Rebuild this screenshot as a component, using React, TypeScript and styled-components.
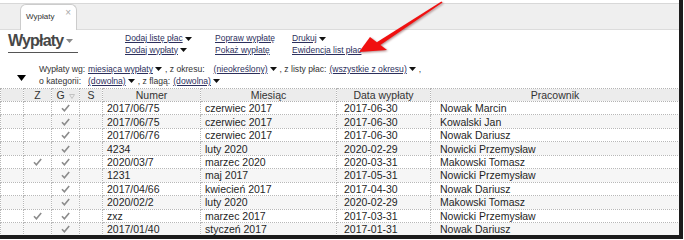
import React from 'react';
import styled, { createGlobalStyle } from 'styled-components';

const GlobalStyle = createGlobalStyle`
  html, body {
    margin: 0;
    padding: 0;
    background: #ffffff;
  }
  body {
    font-family: "Liberation Sans", Arial, sans-serif;
    color: #222222;
  }
`;

const Page = styled.div`
  position: relative;
  width: 684px;
  height: 240px;
  overflow: hidden;
  background: #ffffff;
`;

const Window = styled.div`
  box-sizing: border-box;
  width: 683px;
  height: 239px;
  border-right: 4px solid #1c1c1c;
  border-bottom: 4px solid #1c1c1c;
  overflow: hidden;
  display: flex;
  flex-direction: column;
`;

const TabBar = styled.div`
  box-sizing: border-box;
  margin-top: 3px;
  height: 27px;
  flex: none;
  display: flex;
  align-items: flex-end;
  padding-left: 20px;
  background: #efefef;
  border-top: 1px solid #d8d8d8;
  border-bottom: 1px solid #dcdcdc;
`;

const Tab = styled.div`
  box-sizing: border-box;
  width: 57px;
  height: 26px;
  margin-bottom: -1px;
  display: flex;
  align-items: center;
  justify-content: space-between;
  padding: 0 5px 2px 5px;
  background: #ffffff;
  border: 1px solid #cccccc;
  border-bottom: none;
  border-radius: 6px 6px 0 0;
`;

const TabLabel = styled.span`
  font-size: 8px;
  color: #333333;
`;

const TabClose = styled.span`
  font-size: 10px;
  color: #a8a8a8;
  margin-top: -8px;
`;

const Header = styled.div`
  height: 31px;
  flex: none;
  display: flex;
  padding-left: 8px;
`;

const TitleBlock = styled.div`
  width: 117px;
  flex: none;
  padding-top: 1px;
`;

const Title = styled.div`
  display: inline-flex;
  align-items: center;
  gap: 3px;
  font-size: 16px;
  line-height: 20px;
  font-weight: bold;
  letter-spacing: -0.8px;
  color: #474747;
  border-bottom: 1px solid #555555;
  padding: 0 5px 1px 0;
`;

const LinkColumn = styled.div<{ $width: number }>`
  width: ${(p) => p.$width}px;
  flex: none;
  display: flex;
  flex-direction: column;
  padding-top: 3px;
`;

const MenuLink = styled.div`
  height: 11.5px;
  font-size: 8.5px;
  line-height: 11.5px;
  color: #2c2f5c;
  white-space: nowrap;
  display: flex;
  align-items: center;
  gap: 2px;
`;

const Underlined = styled.span`
  text-decoration: underline;
`;

const Filters = styled.div`
  margin-top: 2px;
  height: 24px;
  flex: none;
  display: flex;
`;

const FilterToggle = styled.div`
  width: 39px;
  flex: none;
  display: flex;
  align-items: flex-end;
  padding: 0 0 6px 17px;
  box-sizing: border-box;
`;

const FilterGrid = styled.div`
  display: grid;
  grid-template-columns: 49px auto;
  grid-auto-rows: 12px;
  align-items: center;
  font-size: 8.6px;
  color: #333333;
`;

const FilterLine = styled.div`
  display: flex;
  align-items: center;
  white-space: nowrap;
`;

const Pick = styled.span<{ $lead?: number }>`
  display: inline-flex;
  align-items: center;
  gap: 2px;
  margin-left: ${(p) => p.$lead ?? 0}px;
  color: #2c2f5c;
`;

const Sep = styled.span`
  margin-left: 3px;
`;

const Grid = styled.table`
  margin-top: 1px;
  width: 679px;
  border-collapse: collapse;
  table-layout: fixed;
  font-size: 10.5px;
`;

const HeadRow = styled.tr`
  height: 13px;
  background: #ececec;
`;

const Th = styled.th`
  padding: 0;
  font-weight: normal;
  color: #333333;
  text-align: center;
  border: 1px dotted #b3b3b3;
  white-space: nowrap;
  overflow: hidden;
`;

const BodyRow = styled.tr<{ $alt: boolean }>`
  height: 13.45px;
  background: ${(p) => (p.$alt ? '#f6f6f6' : '#ffffff')};
`;

const Td = styled.td<{ $pad?: number; $center?: boolean }>`
  padding: 0 0 0 ${(p) => p.$pad ?? 0}px;
  text-align: ${(p) => (p.$center ? 'center' : 'left')};
  line-height: 12px;
  color: #1f1f1f;
  border: 1px dotted #b8b8b8;
  white-space: nowrap;
  overflow: hidden;
`;

const Arrow = styled.svg`
  position: absolute;
  left: 0;
  top: 0;
  pointer-events: none;
  filter: drop-shadow(1px 1px 1px rgba(80, 0, 0, 0.45));
`;

const Caret = ({ color = '#111111' }: { color?: string }): React.ReactElement => (
  <svg width="7" height="4" viewBox="0 0 7 4">
    <polygon points="0,0 7,0 3.5,4" fill={color} />
  </svg>
);

const Check = (): React.ReactElement => (
  <svg width="9" height="8" viewBox="0 0 9 8" style={{ display: 'block', margin: '0 auto' }}>
    <path d="M1 4.2 L3.4 6.8 L8.2 1" stroke="#8c8c8c" strokeWidth="1.6" fill="none" />
  </svg>
);

const SortHint = (): React.ReactElement => (
  <svg width="6" height="5" viewBox="0 0 6 5" style={{ marginLeft: 4 }}>
    <polygon points="0.5,0.5 5.5,0.5 3,4.5" fill="none" stroke="#c2c2c2" strokeWidth="1" />
  </svg>
);

interface IPayment {
  z: boolean;
  numer: string;
  miesiac: string;
  data: string;
  pracownik: string;
}

const payments: IPayment[] = [
  { z: false, numer: '2017/06/75', miesiac: 'czerwiec 2017', data: '2017-06-30', pracownik: 'Nowak Marcin' },
  { z: false, numer: '2017/06/75', miesiac: 'czerwiec 2017', data: '2017-06-30', pracownik: 'Kowalski Jan' },
  { z: false, numer: '2017/06/76', miesiac: 'czerwiec 2017', data: '2017-06-30', pracownik: 'Nowak Dariusz' },
  { z: false, numer: '4234', miesiac: 'luty 2020', data: '2020-02-29', pracownik: 'Nowicki Przemysław' },
  { z: true, numer: '2020/03/7', miesiac: 'marzec 2020', data: '2020-03-31', pracownik: 'Makowski Tomasz' },
  { z: false, numer: '1231', miesiac: 'maj 2017', data: '2017-05-31', pracownik: 'Nowicki Przemysław' },
  { z: false, numer: '2017/04/66', miesiac: 'kwiecień 2017', data: '2017-04-30', pracownik: 'Nowak Dariusz' },
  { z: false, numer: '2020/02/2', miesiac: 'luty 2020', data: '2020-02-29', pracownik: 'Makowski Tomasz' },
  { z: true, numer: 'zxz', miesiac: 'marzec 2017', data: '2017-03-31', pracownik: 'Nowicki Przemysław' },
  { z: false, numer: '2017/01/40', miesiac: 'styczeń 2017', data: '2017-01-31', pracownik: 'Nowak Dariusz' },
];

const columnWidths = [23, 28, 28, 23, 98, 136, 94, 249];

export default function App(): React.ReactElement {
  return (
    <Page>
      <GlobalStyle />
      <Window>
        <TabBar>
          <Tab>
            <TabLabel>Wypłaty</TabLabel>
            <TabClose>×</TabClose>
          </Tab>
        </TabBar>

        <Header>
          <TitleBlock>
            <Title>
              Wypłaty
              <Caret color="#8a8a8a" />
            </Title>
          </TitleBlock>
          <LinkColumn $width={90}>
            <MenuLink><Underlined>Dodaj listę płac</Underlined><Caret /></MenuLink>
            <MenuLink><Underlined>Dodaj wypłaty</Underlined><Caret /></MenuLink>
          </LinkColumn>
          <LinkColumn $width={77}>
            <MenuLink><Underlined>Popraw wypłatę</Underlined></MenuLink>
            <MenuLink><Underlined>Pokaż wypłatę</Underlined></MenuLink>
          </LinkColumn>
          <LinkColumn $width={120}>
            <MenuLink><Underlined>Drukuj</Underlined><Caret /></MenuLink>
            <MenuLink><Underlined>Ewidencja list płac</Underlined></MenuLink>
          </LinkColumn>
        </Header>

        <Filters>
          <FilterToggle>
            <svg width="9" height="6" viewBox="0 0 9 6">
              <polygon points="0,0 9,0 4.5,6" fill="#000000" />
            </svg>
          </FilterToggle>
          <FilterGrid>
            <span>Wypłaty wg:</span>
            <FilterLine>
              <Pick><Underlined>miesiąca wypłaty</Underlined><Caret /></Pick>
              <Sep>, z okresu:</Sep>
              <Pick $lead={9}><Underlined>(nieokreślony)</Underlined><Caret /></Pick>
              <Sep>, z listy płac:</Sep>
              <Pick $lead={3}><Underlined>(wszystkie z okresu)</Underlined><Caret /></Pick>
              <Sep>,</Sep>
            </FilterLine>
            <span>o kategorii:</span>
            <FilterLine>
              <Pick><Underlined>(dowolna)</Underlined><Caret /></Pick>
              <Sep>, z flagą:</Sep>
              <Pick $lead={3}><Underlined>(dowolna)</Underlined><Caret /></Pick>
            </FilterLine>
          </FilterGrid>
        </Filters>

        <Grid>
          <colgroup>
            {columnWidths.map((w, i) => <col key={i} style={{ width: w }} />)}
          </colgroup>
          <thead>
            <HeadRow>
              <Th />
              <Th>Z</Th>
              <Th>G<SortHint /></Th>
              <Th>S</Th>
              <Th>Numer</Th>
              <Th>Miesiąc</Th>
              <Th>Data wypłaty</Th>
              <Th>Pracownik</Th>
            </HeadRow>
          </thead>
          <tbody>
            {payments.map((p, i) => (
              <BodyRow key={i} $alt={i % 2 === 1}>
                <Td />
                <Td $center>{p.z && <Check />}</Td>
                <Td $center><Check /></Td>
                <Td />
                <Td $pad={4}>{p.numer}</Td>
                <Td $pad={4}>{p.miesiac}</Td>
                <Td $pad={7}>{p.data}</Td>
                <Td $pad={9}>{p.pracownik}</Td>
              </BodyRow>
            ))}
          </tbody>
        </Grid>
      </Window>

      <Arrow width="684" height="240" viewBox="0 0 684 240">
        <polygon points="442.6,2.6 441.4,1.4 376.8,42.2 379.2,45.8" fill="#f01010" />
        <polygon points="359,52 370,37 387,50" fill="#f01010" />
      </Arrow>
    </Page>
  );
}
